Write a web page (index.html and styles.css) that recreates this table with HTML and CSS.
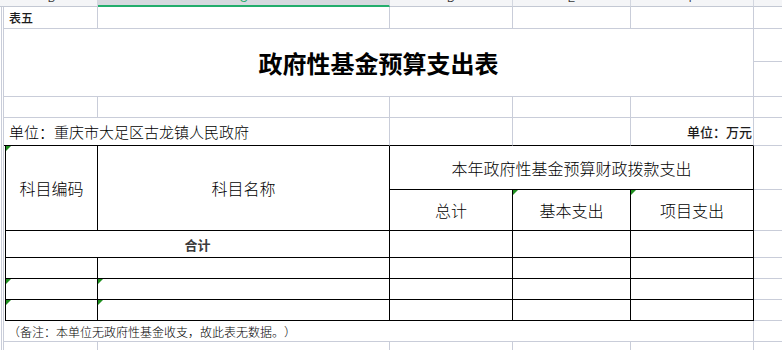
FILE: index.html
```html
<!DOCTYPE html>
<html lang="zh-CN">
<head>
<meta charset="utf-8">
<title>政府性基金预算支出表</title>
<link rel="stylesheet" href="styles.css">
</head>
<body>
<div class="sheet">
  <div class="c0"></div>
  <div class="c1"></div>
  <div class="corner"></div>
  <div class="hd"><span>B</span></div>
  <div class="hd sel"><span>C</span></div>
  <div class="hd"><span>D</span></div>
  <div class="hd"><span>E</span></div>
  <div class="hd"><span>F</span></div>
  <div class="hd hg"></div>

  <div class="cell s2 gr gb lab">表五</div>
  <div class="cell gr gb"></div>
  <div class="cell gr gb"></div>
  <div class="cell gr gb"></div>
  <div class="cell gr gb"></div>
  <div class="cell gb"></div>

  <div class="cell title gr gb">政府性基金预算支出表</div>
  <div class="cell gb"></div>
  <div class="cell gb"></div>

  <div class="cell gb"></div>
  <div class="cell gr gb"></div>
  <div class="cell gr gb"></div>
  <div class="cell gr gb"></div>
  <div class="cell gr gb"></div>
  <div class="cell gr gb"></div>
  <div class="cell gb"></div>

  <div class="cell s3 gr kb unit">单位：重庆市大足区古龙镇人民政府</div>
  <div class="cell gr kb"></div>
  <div class="cell gr kb"></div>
  <div class="cell gr kb unitr">单位：万元</div>
  <div class="cell gb"></div>

  <div class="cell edge kr"></div>
  <div class="cell r2 kr kb th tri">科目编码</div>
  <div class="cell r2 kr kb th">科目名称</div>
  <div class="cell s3 kr kb th">本年政府性基金预算财政拨款支出</div>
  <div class="cell gb"></div>

  <div class="cell kr kb th">总计</div>
  <div class="cell kr kb th tri">基本支出</div>
  <div class="cell kr kb th tri">项目支出</div>
  <div class="cell gb"></div>

  <div class="cell s2 kr kb total">合计</div>
  <div class="cell kr kb"></div>
  <div class="cell kr kb"></div>
  <div class="cell kr kb"></div>
  <div class="cell gb"></div>

  <div class="cell kr kb"></div>
  <div class="cell kr kb"></div>
  <div class="cell kr kb"></div>
  <div class="cell kr kb"></div>
  <div class="cell kr kb"></div>
  <div class="cell gb"></div>

  <div class="cell kr kb tri"></div>
  <div class="cell kr kb tri"></div>
  <div class="cell kr kb"></div>
  <div class="cell kr kb"></div>
  <div class="cell kr kb"></div>
  <div class="cell gb"></div>

  <div class="cell kr kb tri"></div>
  <div class="cell kr kb tri"></div>
  <div class="cell kr kb"></div>
  <div class="cell kr kb"></div>
  <div class="cell kr kb"></div>
  <div class="cell gb"></div>

  <div class="cell s6 gr gb note">（备注：本单位无政府性基金收支，故此表无数据。）</div>
  <div class="cell gb"></div>

  <div class="cell"></div>
  <div class="cell gr"></div>
  <div class="cell gr"></div>
  <div class="cell gr"></div>
  <div class="cell gr"></div>
  <div class="cell gr"></div>
  <div class="cell"></div>
</div>
</body>
</html>
```

FILE: styles.css
```css
* {
  box-sizing: border-box;
  margin: 0;
  padding: 0;
}

html,
body {
  width: 782px;
  height: 350px;
  overflow: hidden;
  background: #ffffff;
}

body {
  font-family: "Noto Sans CJK SC", "Noto Sans", sans-serif;
  color: #000000;
  text-spacing-trim: space-all;
}

.sheet {
  display: grid;
  grid-template-columns: 2px 2px 2px 92px 292px 123px 118px 123px 1fr;
  grid-template-rows: 7px 22px 33px 35px 21px 28px 44px 41px 27px 21px 21px 21px 21px 1fr;
  width: 782px;
  height: 350px;
}

.c0 {
  grid-column: 1;
  grid-row: 2 / -1;
  border-right: 1px solid #c9cdd9;
}

.c1 {
  grid-column: 2;
  grid-row: 2 / -1;
  border-right: 1px solid #c9cdd9;
}

.corner {
  grid-column: 1 / span 3;
  background: #f4f5f7;
  border-bottom: 1px solid #c3c8d3;
}

.hd {
  display: flex;
  justify-content: center;
  align-items: flex-end;
  overflow: hidden;
  background: #f4f5f7;
  border-right: 1px solid #d3d7e0;
  border-bottom: 1px solid #c3c8d3;
  padding-bottom: 3px;
  font-family: "Liberation Sans", sans-serif;
  font-size: 11px;
  line-height: 10px;
  color: #3a3a3a;
}

.hd.sel {
  background: #d6d9df;
  border-bottom: 2px solid #22ad6c;
  padding-bottom: 2px;
  color: #22ad6c;
}

.hd.hg {
  border-right: none;
}

.cell {
  display: flex;
  align-items: center;
  min-width: 0;
  white-space: nowrap;
  position: relative;
}

.s2 { grid-column: span 2; }
.s3 { grid-column: span 3; }
.s6 { grid-column: span 6; }
.r2 { grid-row: span 2; }

.gr { border-right: 1px solid #c9cdd9; }
.gb { border-bottom: 1px solid #c9cdd9; }
.kr { border-right: 1px solid #000000; }
.kb { border-bottom: 1px solid #000000; }

.edge {
  grid-row: span 6;
}

.title {
  grid-column: span 6;
  grid-row: span 2;
  justify-content: center;
  font-size: 24px;
  font-weight: 700;
}

.lab {
  padding-left: 5px;
  font-size: 12px;
  font-weight: 500;
  color: #1c1c1c;
}

.unit {
  padding-left: 5px;
  font-size: 15px;
  font-weight: 300;
}

.unitr {
  justify-content: flex-end;
  padding-right: 1px;
  font-size: 13px;
  font-weight: 500;
  color: #1c1c1c;
}

.th {
  justify-content: center;
  font-size: 16px;
  font-weight: 300;
}

.total {
  justify-content: center;
  font-size: 13px;
  font-weight: 700;
  color: #3a3a3a;
}

.note {
  padding-left: 4px;
  font-size: 12px;
  font-weight: 300;
}

.tri::before {
  content: "";
  position: absolute;
  top: 0;
  left: 0;
  border-top: 5px solid #1f8f1f;
  border-right: 5px solid transparent;
}
```
